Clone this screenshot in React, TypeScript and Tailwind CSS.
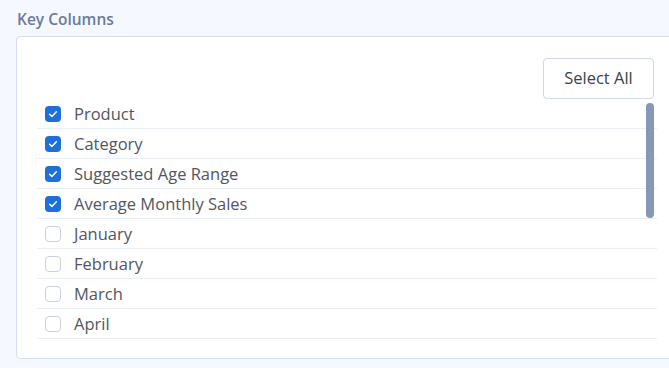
import React, { useState } from 'react';

// Only the rows in view of the scroll box; the rest sit below the fold
const columns = [
  'Product',
  'Category',
  'Suggested Age Range',
  'Average Monthly Sales',
  'January',
  'February',
  'March',
  'April',
];

const CheckBox: React.FC<{ checked: boolean }> = ({ checked }) =>
  checked ? (
    <span className="flex h-4 w-4 items-center justify-center rounded-[4px] bg-[#1f6fd8]">
      <svg viewBox="0 0 16 16" className="h-3 w-3" fill="none">
        <path d="M3.5 8.3l3 2.9 6-6.2" stroke="#fff" strokeWidth="2" strokeLinecap="round" strokeLinejoin="round" />
      </svg>
    </span>
  ) : (
    <span className="h-4 w-4 rounded-[4px] border border-[#c8d0e2] bg-white" />
  );

const App: React.FC = () => {
  const [selected] = useState<string[]>(columns.slice(0, 4));

  return (
    <div className="h-[368px] w-[669px] overflow-hidden bg-[#f5f8fe] pl-4 pt-[8px] font-['Open_Sans',sans-serif]">
      {/* Section title */}
      <h3 className="h-[28px] pl-px text-[15.5px] font-semibold leading-[22px] text-[#6b7b9b]">Key Columns</h3>

      {/* Panel */}
      <div className="h-[323px] w-[680px] rounded-[4px] border border-[#d6ddee] bg-white pl-5 pt-[21px]">
        <div className="flex w-[620px] justify-end pr-[3px]">
          <button className="h-[41px] w-[111px] rounded-[4px] border border-[#cfd7e8] bg-white text-[16.5px] text-[#3a4150]">
            Select All
          </button>
        </div>

        <div className="relative h-[240px] w-[620px] overflow-hidden">
          {columns.map((col) => (
            <div key={col} className="flex h-[30px] items-center gap-[13px] border-b border-[#e9eef8] pl-2 last:border-b-0">
              <CheckBox checked={selected.includes(col)} />
              <span className="text-[16.5px] leading-5 text-[#52565f]">{col}</span>
            </div>
          ))}
          {/* scroll thumb */}
          <div className="absolute right-[3px] top-1 h-[115px] w-2 rounded-full bg-[#8797b8]" />
        </div>
      </div>
    </div>
  );
};

export default App;
